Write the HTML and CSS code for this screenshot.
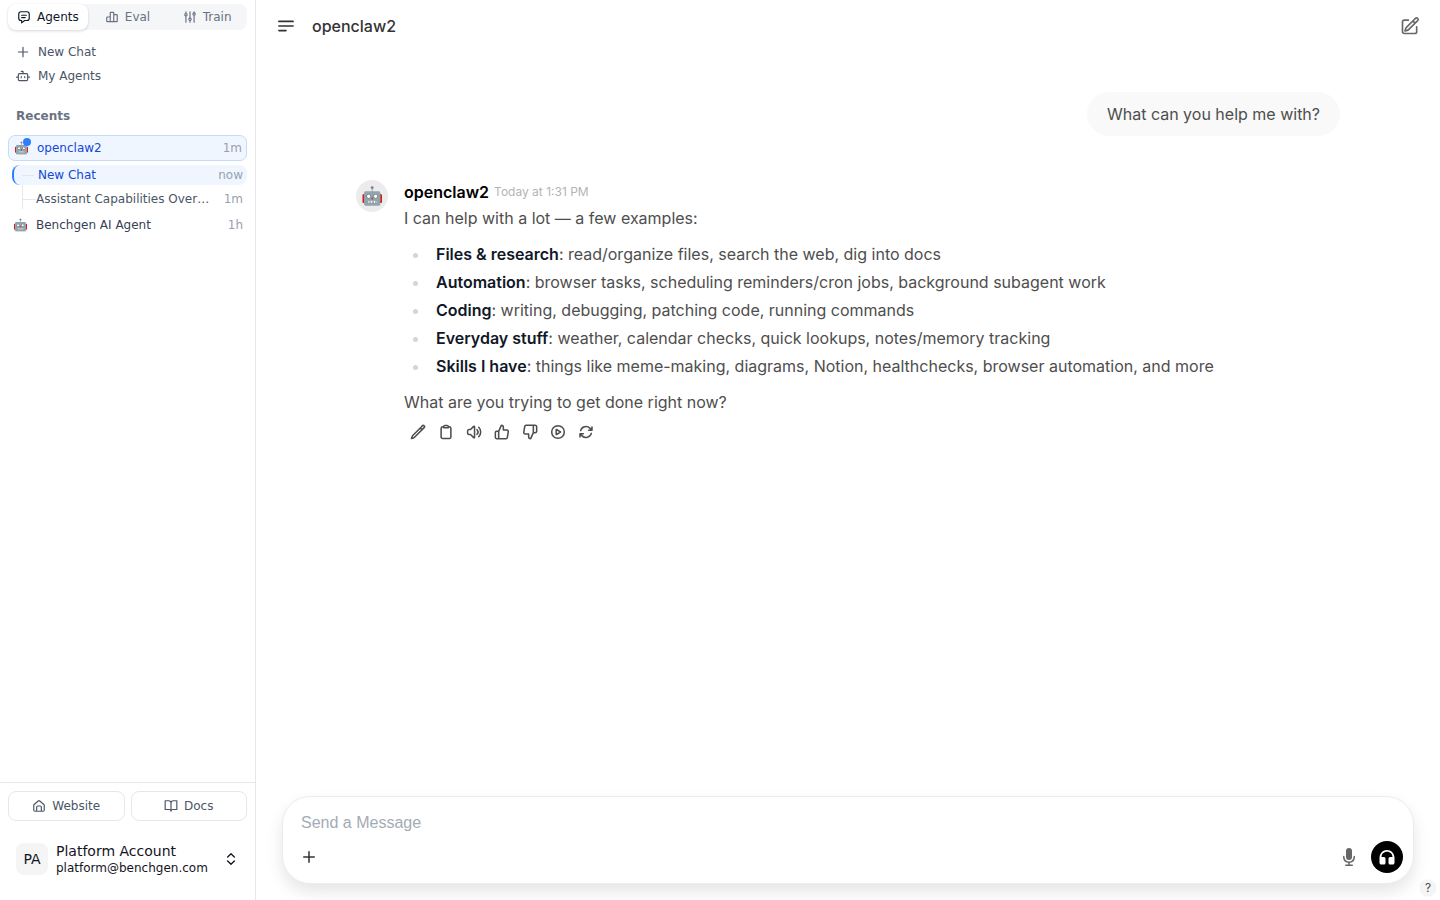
FILE: index.html
```html
<!DOCTYPE html>
<html lang="en">
<head>
<meta charset="utf-8">
<meta name="viewport" content="width=device-width, initial-scale=1">
<title>openclaw2</title>
<link rel="stylesheet" href="styles.css">
</head>
<body>
<div class="app">
  <aside class="sidebar">
    <nav class="tabs" aria-label="Sections">
      <button class="tab tab-active" type="button">
        <svg class="icon icon-sm" viewBox="0 0 24 24"><path d="M7 3h10a4 4 0 0 1 4 4v7a4 4 0 0 1-4 4h-4l-5 4v-4H7a4 4 0 0 1-4-4V7a4 4 0 0 1 4-4zM8 9h8M8 13h6"/></svg>Agents</button>
      <button class="tab" type="button">
        <svg class="icon icon-sm" viewBox="0 0 24 24"><path d="M3 13a1 1 0 0 1 1-1h4a1 1 0 0 1 1 1v7H4a1 1 0 0 1-1-1zM9 5a1 1 0 0 1 1-1h4a1 1 0 0 1 1 1v15H9zM15 9a1 1 0 0 1 1-1h4a1 1 0 0 1 1 1v10a1 1 0 0 1-1 1h-5z"/></svg>Eval</button>
      <button class="tab" type="button">
        <svg class="icon icon-sm" viewBox="0 0 24 24"><circle cx="5" cy="8" r="2"/><circle cx="12" cy="16" r="2"/><circle cx="19" cy="7" r="2"/><path d="M5 3v3M5 10v11M12 3v11M12 18v3M19 3v2M19 9v12"/></svg>Train</button>
    </nav>

    <nav class="menu" aria-label="Actions">
      <a class="menu-link" href="#"><svg class="icon icon-sm" viewBox="0 0 24 24"><path d="M12 4v16M4 12h16"/></svg>New Chat</a>
      <a class="menu-link" href="#"><svg class="icon icon-sm" viewBox="0 0 24 24"><path d="M6 8h12a2 2 0 0 1 2 2v8a2 2 0 0 1-2 2H6a2 2 0 0 1-2-2v-8a2 2 0 0 1 2-2zM12 8V4H9M1 14h3M20 14h3M9 13v2M15 13v2"/></svg>My Agents</a>
    </nav>

    <h2 class="section-title">Recents</h2>
    <div class="recents">
      <a class="recent recent-selected" href="#">
        <span class="bot">🤖<span class="bot-dot"></span></span>
        <span class="recent-name">openclaw2</span><span class="recent-time">1m</span>
      </a>
      <div class="threads">
        <a class="thread thread-selected" href="#"><span class="branch"></span><span class="recent-name">New Chat</span><span class="recent-time">now</span></a>
        <a class="thread" href="#"><span class="branch"></span><span class="recent-name">Assistant Capabilities Overview</span><span class="recent-time">1m</span></a>
      </div>
      <a class="recent" href="#">
        <span class="bot">🤖</span>
        <span class="recent-name">Benchgen AI Agent</span><span class="recent-time">1h</span>
      </a>
    </div>

    <footer class="sidebar-footer">
      <div class="footer-links">
        <a class="footer-link" href="#"><svg class="icon icon-sm" viewBox="0 0 24 24"><path d="M3 11a2 2 0 0 1 .7-1.500l7-6a2 2 0 0 1 2.600 0l7 6A2 2 0 0 1 21 11v8a2 2 0 0 1-2 2H5a2 2 0 0 1-2-2zM8 21v-7a2 2 0 0 1 2-2h4a2 2 0 0 1 2 2v7"/></svg>Website</a>
        <a class="footer-link" href="#"><svg class="icon icon-sm" viewBox="0 0 24 24"><path d="M12 7v14M12 7a4 4 0 0 0-4-4H2v15h7a3 3 0 0 1 3 3 3 3 0 0 1 3-3h7V3h-6a4 4 0 0 0-4 4z"/></svg>Docs</a>
      </div>
      <button class="account" type="button">
        <span class="account-avatar">PA</span>
        <span class="account-text"><span class="account-name">Platform Account</span><span class="account-mail">platform@benchgen.com</span></span>
        <svg class="icon icon-lg" viewBox="0 0 24 24"><path d="m7 15 5 5 5-5M7 9l5-5 5 5"/></svg>
      </button>
    </footer>
  </aside>

  <main class="main">
    <header class="topbar">
      <button class="icon-button" type="button" aria-label="Toggle sidebar"><svg class="icon icon-xl" viewBox="0 0 24 24"><path d="M3.500 6.500h17M3.500 12h17M3.500 17.500H12"/></svg></button>
      <h1 class="title">openclaw2</h1>
      <button class="icon-button compose" type="button" aria-label="New chat"><svg class="icon icon-xl" viewBox="0 0 24 24"><path d="m16.900 4.500 1.600-1.700a1.900 1.900 0 1 1 2.700 2.700L10.600 16a4.500 4.500 0 0 1-1.900 1.200L6 18l.8-2.700A4.500 4.500 0 0 1 8 13.400zM15.500 5.900l2.600 2.600M20 13v5.800a2.200 2.200 0 0 1-2.200 2.200H5.200A2.200 2.200 0 0 1 3 18.800V7.200A2.200 2.200 0 0 1 5.200 5H10"/></svg></button>
    </header>

    <section class="conversation">
      <p class="user-message">What can you help me with?</p>
      <article class="reply">
        <span class="reply-avatar">🤖</span>
        <div class="reply-body">
          <div class="reply-head"><span class="reply-name">openclaw2</span><time class="reply-time">Today at 1:31 PM</time></div>
          <p class="reply-text">I can help with a lot — a few examples:</p>
          <ul class="reply-list">
            <li><strong>Files &amp; research</strong>: read/organize files, search the web, dig into docs</li>
            <li><strong>Automation</strong>: browser tasks, scheduling reminders/cron jobs, background subagent work</li>
            <li><strong>Coding</strong>: writing, debugging, patching code, running commands</li>
            <li><strong>Everyday stuff</strong>: weather, calendar checks, quick lookups, notes/memory tracking</li>
            <li><strong>Skills I have</strong>: things like meme-making, diagrams, Notion, healthchecks, browser automation, and more</li>
          </ul>
          <p class="reply-text">What are you trying to get done right now?</p>
          <div class="reply-actions">
            <button type="button" aria-label="Edit"><svg class="icon icon-lg" viewBox="0 0 24 24"><path d="m16.900 4.500 1.600-1.700a1.900 1.900 0 1 1 2.700 2.700L6.800 19.800a4.500 4.500 0 0 1-1.900 1.100L2.200 21.800l.9-2.700A4.500 4.500 0 0 1 4.200 17.200zM15.500 5.900l2.600 2.600"/></svg></button>
            <button type="button" aria-label="Copy"><svg class="icon icon-lg" viewBox="0 0 24 24"><path d="M15.700 3.900A2.200 2.200 0 0 0 13.500 2.200h-3a2.200 2.200 0 0 0-2.200 1.700v1.600h7.400zM8.300 3.900l-1.700.2a2.200 2.200 0 0 0-1.900 2.200v13.200a2.200 2.200 0 0 0 2.200 2.300h10.200a2.200 2.200 0 0 0 2.200-2.300V6.300a2.200 2.200 0 0 0-1.900-2.200l-1.700-.2"/></svg></button>
            <button type="button" aria-label="Read aloud"><svg class="icon icon-lg" viewBox="0 0 24 24"><path d="M19.100 4.900a10 10 0 0 1 0 14.200M16.500 8.500a5 5 0 0 1 0 7M6.800 8.200l4.700-4.700a.8.8 0 0 1 1.300.5v16a.8.8 0 0 1-1.300.5l-4.700-4.700H4.500c-.9 0-1.700-.5-1.900-1.400a10 10 0 0 1 0-4.800c.2-.9 1-1.400 1.900-1.400z"/></svg></button>
            <button type="button" aria-label="Good response"><svg class="icon icon-lg" viewBox="0 0 24 24"><path d="M7 11v11M14 9h5.400a2 2 0 0 1 2 2.300l-1.400 9a2 2 0 0 1-2 1.700H4a2 2 0 0 1-2-2v-7a2 2 0 0 1 2-2h3l4-9a3 3 0 0 1 3 3z"/></svg></button>
            <button type="button" aria-label="Bad response"><svg class="icon icon-lg" viewBox="0 0 24 24"><path d="M17 2v11M10 15H4.700a2 2 0 0 1-2-2.300l1.400-9a2 2 0 0 1 2-1.700H19.700A2.300 2.300 0 0 1 22 4v7a2.300 2.300 0 0 1-2.300 2H17l-4 9a3 3 0 0 1-3-3z"/></svg></button>
            <button type="button" aria-label="Continue"><svg class="icon icon-lg" viewBox="0 0 24 24"><circle cx="12" cy="12" r="9.500"/><path d="m9.800 8.300 5.900 3.400a.4.4 0 0 1 0 .6l-5.900 3.400a.3.3 0 0 1-.5-.3V8.600a.3.3 0 0 1 .5-.3z"/></svg></button>
            <button type="button" aria-label="Regenerate"><svg class="icon icon-lg" viewBox="0 0 24 24"><path d="M16 9.300h5V4.400M3 19.600v-5h5M3 14.600l3.200 3.200a8.300 8.300 0 0 0 13.800-3.700M4 9.900a8.300 8.300 0 0 1 13.800-3.700L21 9.300"/></svg></button>
          </div>
        </div>
      </article>
    </section>

    <div class="dock">
      <form class="composer">
        <input class="composer-input" type="text" placeholder="Send a Message" aria-label="Send a Message">
        <div class="composer-bar">
          <button class="composer-add" type="button" aria-label="More"><svg viewBox="0 0 20 20" fill="currentColor"><path d="M10.750 4.750a.75.75 0 0 0-1.500 0v4.500h-4.500a.75.75 0 0 0 0 1.500h4.500v4.500a.75.75 0 0 0 1.500 0v-4.500h4.500a.75.75 0 0 0 0-1.500h-4.500z"/></svg></button>
          <button class="composer-mic" type="button" aria-label="Record voice"><svg viewBox="0 0 20 20" fill="currentColor"><path d="M7 4a3 3 0 0 1 6 0v6a3 3 0 1 1-6 0z"/><path d="M5.500 9.600a.75.75 0 0 0-1.500 0v.4a6 6 0 0 0 5.250 5.950v1.550h-2.500a.75.75 0 0 0 0 1.500h6.500a.75.75 0 0 0 0-1.500h-2.500v-1.550A6 6 0 0 0 16 10v-.4a.75.75 0 0 0-1.500 0v.4a4.500 4.500 0 0 1-9 0z"/></svg></button>
          <button class="composer-call" type="button" aria-label="Call"><svg viewBox="0 0 24 24" fill="currentColor"><path d="M12 5C7.600 5 4.700 8.200 4.700 12H8a2 2 0 0 1 2 2v6a2 2 0 0 1-2 2H4.500A2.500 2.500 0 0 1 2 19.500V13C2 7 6.400 2.500 12 2.500S22 7 22 13v6.500a2.500 2.500 0 0 1-2.500 2.500H16a2 2 0 0 1-2-2v-6a2 2 0 0 1 2-2h3.300C19.300 8.200 16.400 5 12 5z"/></svg></button>
        </div>
      </form>
      <button class="help" type="button" aria-label="Help">?</button>
    </div>
  </main>
</div>
</body>
</html>
```
FILE: styles.css
```css
* { box-sizing: border-box; }
body { margin: 0; background: #fff; }
h1, h2, p, ul { margin: 0; padding: 0; }
a { color: inherit; text-decoration: none; }
button { border: 0; background: none; padding: 0; margin: 0; font: inherit; color: inherit; cursor: pointer; }
svg { display: block; flex: none; }

.icon { fill: none; stroke: currentColor; stroke-width: 2; stroke-linecap: round; stroke-linejoin: round; }
.icon-sm { width: 14px; height: 14px; }
.icon-lg { width: 16px; height: 16px; }
.icon-xl { width: 20px; height: 20px; }

.app { display: flex; height: 100vh; }

.sidebar {
  display: flex; flex-direction: column; flex: none; width: 256px;
  border-right: 1px solid #e5e7eb;
  font: 12px/16px "DejaVu Sans", sans-serif; color: #4a5565;
}
.tabs { display: grid; grid-template-columns: repeat(3, 1fr); margin: 4px 8px 0; border-radius: 8px; background: #f4f6f8; }
.tab { display: flex; align-items: center; justify-content: center; gap: 6px; height: 26px; border-radius: 8px; color: #6a7282; }
.tab-active { background: #fff; color: #101828; box-shadow: 0 1px 3px rgba(0, 0, 0, .16); }
.menu { padding: 10px 8px 0; }
.menu-link { display: flex; align-items: center; gap: 8px; height: 24px; padding: 0 8px; }
.section-title { margin: 20px 16px 11px; font-size: 12px; line-height: 16px; font-weight: 700; color: #6a7282; }

.recents { display: flex; flex-direction: column; gap: 4px; padding: 0 8px; }
.recent { display: flex; align-items: center; gap: 8px; height: 28px; padding: 0 4px 0 5px; color: #364153; }
.recent-selected { height: 26px; border: 1px solid #c3dcf8; border-radius: 7px; background: #eff6ff; padding: 0 4px 0 5px; color: #1447d6; }
.bot { position: relative; width: 15px; font-size: 12px; line-height: 16px; font-family: "DejaVu Sans", "Noto Color Emoji", sans-serif; }
.bot-dot { position: absolute; top: -2px; right: -2px; width: 8px; height: 8px; border-radius: 50%; background: #2b7fff; }
.recent-name { flex: 1; min-width: 0; overflow: hidden; text-overflow: ellipsis; white-space: nowrap; }
.recent-time { color: #99a1af; }
.threads { margin-left: 4px; }
.thread { display: flex; align-items: center; height: 20px; padding: 0 4px 0 10px; }
.thread .recent-name { margin-right: 12px; }
.thread + .thread { height: 28px; margin-bottom: -6px; }
.thread + .thread .branch { align-self: stretch; height: 24px; border-left: 1px solid #e5e7eb; background: linear-gradient(#e5e7eb, #e5e7eb) 0 14px / 100% 1px no-repeat; }
.thread-selected { padding-left: 8px; border-left: 2px solid #2b7fff; border-radius: 8px; background: #eff6ff; color: #1447d6; }
.branch { flex: none; width: 14px; height: 1px; background: #e5e7eb; }
.thread-selected .branch { width: 12px; margin-right: 4px; }

.sidebar-footer { margin-top: auto; padding: 8px 8px 17px; border-top: 1px solid #e5e7eb; }
.footer-links { display: grid; grid-template-columns: 1fr 1fr; gap: 6px; }
.footer-link { display: flex; align-items: center; justify-content: center; gap: 6px; height: 30px; border: 1px solid #e5e7eb; border-radius: 8px; }
.account { display: flex; align-items: center; gap: 8px; width: 100%; height: 48px; margin-top: 14px; padding: 0 8px; text-align: left; color: #14141e; }
.account-avatar { display: grid; place-items: center; width: 32px; height: 32px; border-radius: 8px; background: #f5f5f5; font-size: 14px; }
.account-text { flex: 1; display: flex; flex-direction: column; }
.account-name { font-size: 14px; line-height: 18px; }
.account-mail { font-size: 12px; line-height: 16px; }

.main { display: flex; flex-direction: column; flex: 1; min-width: 0; font: 16px/28px Inter, "Noto Color Emoji", sans-serif; color: #4e4e4e; }
.topbar { display: flex; align-items: center; gap: 16px; height: 52px; padding: 0 20px; }
.icon-button { display: grid; place-items: center; width: 20px; height: 20px; color: #333; }
.title { flex: 1; font-size: 16px; line-height: 24px; font-weight: 500; color: #333; }
.compose { color: #676767; }

.conversation { flex: 1; width: 100%; max-width: 1024px; margin: 0 auto; padding: 40px 20px 0; display: flex; flex-direction: column; }
.user-message { align-self: flex-end; padding: 8px 20px; border-radius: 24px; background: #f9f9f9; }
.reply { display: flex; gap: 16px; margin-top: 44px; }
.reply-avatar { flex: none; display: grid; place-items: center; width: 32px; height: 32px; padding-left: 1px; border-radius: 50%; background: #ececec; font-size: 18px; line-height: 24px; }
.reply-body { flex: 1; min-width: 0; }
.reply-head { display: flex; align-items: center; gap: 5px; height: 24px; }
.reply-name { font-weight: 600; color: #000; }
.reply-time { font-size: 12px; color: #b4b4b4; }
.reply-list { margin: 8px 0; padding-left: 26px; list-style: disc; }
.reply-list li { padding-left: 6px; }
.reply-list li::marker { color: #d1d5dc; }
.reply-list strong { font-weight: 600; color: #101828; }
.reply-actions { display: flex; margin-top: 2px; color: #4e4e4e; }
.reply-actions button { display: grid; place-items: center; width: 28px; height: 28px; }
.reply-actions .icon { stroke-width: 2.3; }

.dock { position: relative; padding: 0 26px 16px; }
.composer { padding: 12px 10px 10px; border: 1px solid #ececec; border-radius: 28px; background: #fff; box-shadow: 0 8px 16px rgba(0, 0, 0, .1); }
.composer-input { display: block; width: 100%; height: 28px; padding: 0 8px; border: 0; outline: 0; background: none; font: 16px/24px "Liberation Sans", Arial, sans-serif; color: #333; }
.composer-input::placeholder { color: #a4abb5; opacity: 1; }
.composer-bar { display: flex; align-items: center; gap: 12px; margin-top: 4px; }
.composer-add, .composer-mic { width: 20px; height: 20px; }
.composer-add { margin: 0 auto 0 6px; color: #333; }
.composer-mic { color: #676767; }
.composer-call { display: grid; place-items: center; width: 32px; height: 32px; border-radius: 50%; background: #000; color: #fff; }
.composer-call svg { width: 18px; height: 18px; }
.help { position: absolute; right: 4px; bottom: 4px; width: 16px; height: 16px; border-radius: 50%; background: #f5f5f5; font-size: 12px; line-height: 16px; box-shadow: 0 0 2px rgba(0, 0, 0, .08); }
```
